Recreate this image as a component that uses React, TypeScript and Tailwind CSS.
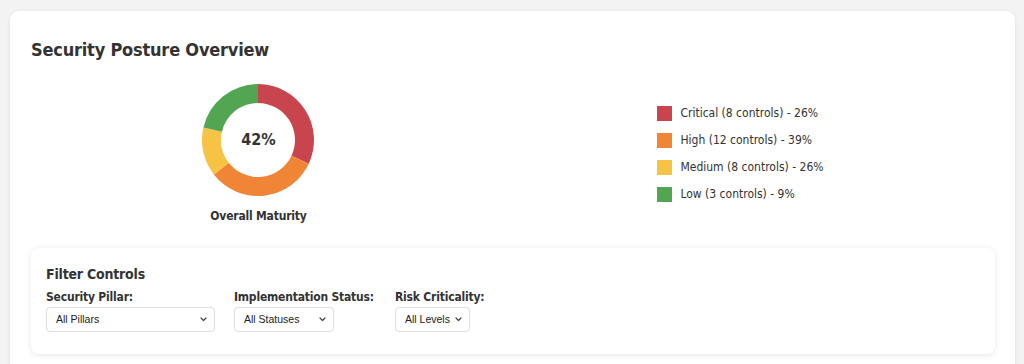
import React from "react";

const FONT = "font-['DejaVu_Sans_Condensed','DejaVu_Sans',sans-serif] [font-stretch:semi-condensed]";

function arcPath(cx: number, cy: number, ro: number, ri: number, a0: number, a1: number) {
  const rad = (a: number) => ((a - 90) * Math.PI) / 180;
  const p = (r: number, a: number) => [cx + r * Math.cos(rad(a)), cy + r * Math.sin(rad(a))];
  const large = a1 - a0 > 180 ? 1 : 0;
  const [x0, y0] = p(ro, a0);
  const [x1, y1] = p(ro, a1);
  const [x2, y2] = p(ri, a1);
  const [x3, y3] = p(ri, a0);
  return `M${x0} ${y0} A${ro} ${ro} 0 ${large} 1 ${x1} ${y1} L${x2} ${y2} A${ri} ${ri} 0 ${large} 0 ${x3} ${y3} Z`;
}

const segments = [
  { a0: 0, a1: 115, color: "#c9454d" },
  { a0: 115, a1: 232, color: "#ef8535" },
  { a0: 232, a1: 283, color: "#f7c344" },
  { a0: 283, a1: 360, color: "#52a652" },
];

const legend = [
  { color: "bg-[#c9454d]", label: "Critical (8 controls) - 26%" },
  { color: "bg-[#ef8535]", label: "High (12 controls) - 39%" },
  { color: "bg-[#f7c344]", label: "Medium (8 controls) - 26%" },
  { color: "bg-[#52a652]", label: "Low (3 controls) - 9%" },
];

function Chevron() {
  return (
    <svg width="7" height="5" viewBox="0 0 7 5" className="shrink-0">
      <path d="M1 1 L3.5 3.5 L6 1" fill="none" stroke="#444" strokeWidth="1.2" strokeLinecap="round" strokeLinejoin="round" />
    </svg>
  );
}

function FakeSelect({ value, width }: { value: string; width: string }) {
  return (
    <div
      className={`${width} h-[25px] flex items-center justify-between pl-[9px] pr-[7px] bg-white border border-[#dedede] rounded-[4px] font-['Liberation_Sans',Arial,sans-serif] text-[10.5px] text-[#222]`}
    >
      <span>{value}</span>
      <Chevron />
    </div>
  );
}

export default function App() {
  return (
    <div className={`min-h-[364px] bg-[#f3f3f3] pl-[10px] pr-[9px] pt-[11px] ${FONT} text-[#333]`}>
      <div className="bg-white rounded-[9px] shadow-[0_1px_4px_rgba(0,0,0,0.08)] pl-[21px] pr-[20px] pt-[27px] pb-[20px]">
        <h2 className="text-[18px] leading-[24px] font-bold tracking-[-0.2px] mb-[22px]">Security Posture Overview</h2>

        <div className="flex items-center justify-around">
          <div className="flex flex-col items-center">
            <div className="relative w-[112px] h-[112px]">
              <svg width="112" height="112" viewBox="0 0 112 112">
                {segments.map((s, i) => (
                  <path key={i} d={arcPath(56, 56, 56, 37, s.a0, s.a1)} fill={s.color} />
                ))}
              </svg>
              <div className="absolute inset-0 flex items-center justify-center text-[16px] font-bold">42%</div>
            </div>
            <div className="mt-[12px] text-[12px] leading-[16px] font-bold tracking-[-0.2px]">Overall Maturity</div>
          </div>

          <div className="flex flex-col gap-[12px]">
            {legend.map((l) => (
              <div key={l.label} className="flex items-center gap-[8px] h-[15px]">
                <span className={`w-[15px] h-[15px] ${l.color}`} />
                <span className="text-[12px] leading-[15px]">{l.label}</span>
              </div>
            ))}
          </div>
        </div>

        <div className="mt-[24px] bg-white rounded-[8px] shadow-[0_1px_6px_rgba(0,0,0,0.1)] pl-[15px] pr-[15px] pt-[17px] pb-[22px]">
          <h3 className="text-[14px] leading-[18px] font-bold tracking-[-0.2px] mb-[6px]">Filter Controls</h3>
          <div className="flex gap-[19px]">
            <div className="w-[169px] flex flex-col">
              <label className="text-[12px] leading-[16px] font-bold tracking-[-0.2px] mb-[2px] whitespace-nowrap">Security Pillar:</label>
              <FakeSelect value="All Pillars" width="w-[169px]" />
            </div>
            <div className="w-[142px] flex flex-col">
              <label className="text-[12px] leading-[16px] font-bold tracking-[-0.2px] mb-[2px] whitespace-nowrap">Implementation Status:</label>
              <FakeSelect value="All Statuses" width="w-[100px]" />
            </div>
            <div className="flex flex-col">
              <label className="text-[12px] leading-[16px] font-bold tracking-[-0.2px] mb-[2px] whitespace-nowrap">Risk Criticality:</label>
              <FakeSelect value="All Levels" width="w-[75px]" />
            </div>
          </div>
        </div>
      </div>
    </div>
  );
}
